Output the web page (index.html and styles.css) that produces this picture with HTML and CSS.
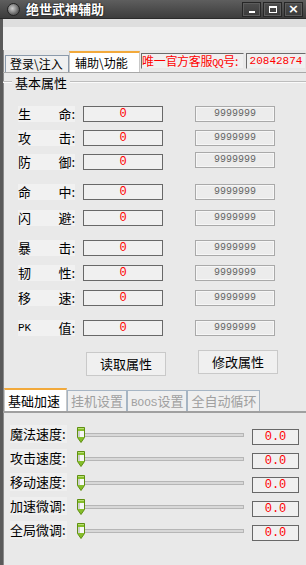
FILE: index.html
```html
<!DOCTYPE html>
<html>
<head>
<meta charset="utf-8">
<title>绝世武神辅助</title>
<link rel="stylesheet" href="styles.css">
</head>
<body>
<svg width="0" height="0" style="position:absolute">
	<defs>
		<symbol id="thumb" viewBox="0 0 8 16">
			<path d="M0.5 0.5h7v10l-3.5 5l-3.5-5z" fill="#86bf2a" stroke="#5f8f12"/>
			<rect x="1" y="4" width="6" height="6" fill="#f6f6f6"/>
			<rect x="1" y="4" width="2" height="6" fill="#cfcfcf"/>
			<rect x="1" y="1" width="6" height="1" fill="#b8e070"/>
		</symbol>
	</defs>
</svg>
<div class="win">
	<div class="titlebar">
		<span class="app-icon"></span>
		<span class="title">绝世武神辅助</span>
		<div class="win-btns">
			<span class="wbtn"><i class="ic-min"></i></span>
			<span class="wbtn"><i class="ic-max"></i></span>
			<span class="wbtn ic-close">×</span>
		</div>
	</div>
	<div class="frame">
		<div class="band"></div>

		<div class="tabs top-tabs">
			<span class="tab">登录\注入</span>
			<span class="tab active">辅助\功能</span>
			<span class="qq-label">唯一官方客服<em>QQ</em>号:</span>
			<span class="qq-num">20842874</span>
		</div>

		<div class="pane">
			<div class="group-title"><span>基本属性</span></div>

			<div class="attrs">
				<div class="block">
					<div class="row"><span class="lbl"><b>生</b><b>命:</b></span><span class="val">0</span><span class="max">9999999</span></div>
					<div class="row"><span class="lbl"><b>攻</b><b>击:</b></span><span class="val">0</span><span class="max">9999999</span></div>
					<div class="row"><span class="lbl"><b>防</b><b>御:</b></span><span class="val">0</span><span class="max up">9999999</span></div>
				</div>
				<div class="block b2">
					<div class="row"><span class="lbl"><b>命</b><b>中:</b></span><span class="val">0</span><span class="max">9999999</span></div>
					<div class="row"><span class="lbl"><b>闪</b><b>避:</b></span><span class="val">0</span><span class="max">9999999</span></div>
				</div>
				<div class="block b3">
					<div class="row"><span class="lbl"><b>暴</b><b>击:</b></span><span class="val">0</span><span class="max">9999999</span></div>
					<div class="row"><span class="lbl"><b>韧</b><b>性:</b></span><span class="val">0</span><span class="max">9999999</span></div>
					<div class="row"><span class="lbl"><b>移</b><b>速:</b></span><span class="val">0</span><span class="max">9999999</span></div>
				</div>
				<div class="block">
					<div class="row"><span class="lbl"><b class="pk">PK</b><b>值:</b></span><span class="val">0</span><span class="max">9999999</span></div>
				</div>
			</div>

			<div class="actions">
				<span class="btn">读取属性</span>
				<span class="btn up">修改属性</span>
			</div>

			<div class="tabs sub-tabs">
				<span class="tab active">基础加速</span>
				<span class="tab off">挂机设置</span>
				<span class="tab off"><em>BOOS</em>设置</span>
				<span class="tab off">全自动循环</span>
			</div>

			<div class="speeds">
				<div class="srow"><span class="slbl">魔法速度:</span><span class="slider"><svg class="thumb"><use href="#thumb"/></svg><i class="track"></i></span><span class="sval">0.0</span></div>
				<div class="srow"><span class="slbl">攻击速度:</span><span class="slider"><svg class="thumb"><use href="#thumb"/></svg><i class="track"></i></span><span class="sval">0.0</span></div>
				<div class="srow"><span class="slbl">移动速度:</span><span class="slider"><svg class="thumb"><use href="#thumb"/></svg><i class="track"></i></span><span class="sval">0.0</span></div>
				<div class="srow"><span class="slbl">加速微调:</span><span class="slider"><svg class="thumb"><use href="#thumb"/></svg><i class="track"></i></span><span class="sval">0.0</span></div>
				<div class="srow"><span class="slbl">全局微调:</span><span class="slider"><svg class="thumb"><use href="#thumb"/></svg><i class="track"></i></span><span class="sval">0.0</span></div>
			</div>
		</div>
	</div>
</div>
</body>
</html>
```
FILE: styles.css
```css
body { margin: 0; background: #e9e9e9; font-family: "Noto Sans CJK SC", "DejaVu Sans", sans-serif; font-size: 12px; color: #000; }
.win { width: 306px; height: 565px; overflow: hidden; }
.titlebar { height: 18px; display: flex; align-items: center; background: linear-gradient(#5e5e5e, #3c3c3c); border-bottom: 1px solid #2a2a2a; }
.app-icon { width: 11px; height: 11px; margin-left: 7px; border-radius: 50%; background: radial-gradient(circle at 40% 40%, #cfcfcf, #6a6a6a 60%, #333); border: 1px solid #222; }
.title { margin-left: 6px; color: #fff; font-weight: bold; font-size: 13px; line-height: 18px; text-shadow: 0 0 2px #000; }
.win-btns { margin-left: auto; margin-right: 3px; display: flex; gap: 2px; }
.wbtn { width: 17px; height: 13px; border: 1px solid #262626; background: linear-gradient(#4e4e4e, #3a3a3a); box-shadow: inset 0 0 0 1px #5c5c5c; color: #fff; display: flex; align-items: center; justify-content: center; font-size: 13px; font-weight: bold; font-family: "DejaVu Sans", sans-serif; }
.ic-min { width: 6px; height: 2px; background: #fff; margin-top: 6px; }
.ic-max { width: 6px; height: 4px; border: 1px solid #fff; border-top-width: 2px; }
.ic-close { line-height: 12px; }

.frame { height: 546px; border-left: 3px solid #5a5a5a; box-shadow: inset 1px 0 #8a8a8a; }
.band { height: 8px; background: #dedede; border-bottom: 23px solid #efefef; }

.tabs { display: flex; align-items: flex-end; }
.top-tabs { margin-top: 2px; padding-left: 2px; height: 20px; border-bottom: 1px solid #a8a8a8; }
.tab { height: 16px; line-height: 16px; padding: 0 4px; background: #f0f0f0; border: 1px solid #8b9aab; border-bottom: none; white-space: nowrap; }
.tab.active { height: 19px; line-height: 19px; background: #fff; border: 1px solid #c8c8c8; border-top: 2px solid #f2a93b; border-bottom: none; padding: 0 5px; }
.top-tabs .tab { width: 54px; }
.top-tabs .tab.active { width: 59px; }
.qq-label, .qq-num { align-self: flex-start; margin-top: 1px; height: 14px; line-height: 14px; background: #f0f0f0; color: #f00; border: 1px solid; border-color: #6b6b6b #e8e8e8 #e8e8e8 #6b6b6b; }
.qq-label { margin-left: 1px; width: 101px; font-size: 12px; white-space: nowrap; overflow: hidden; letter-spacing: -0.3px; }
.qq-label em { font-style: normal; font-family: "Liberation Mono", monospace; font-size: 10px; letter-spacing: -0.5px; }
.qq-num { margin-left: 2px; flex: 1; text-align: center; font-family: "Liberation Mono", monospace; font-size: 11px; }

.pane { padding-top: 1px; }
.group-title { position: relative; height: 14px; margin-left: 9px; }
.group-title::before { content: ""; position: absolute; left: -9px; right: 0; top: 7px; border-top: 1px solid #bdbdbd; border-bottom: 1px solid #fafafa; }
.group-title span { position: relative; background: #e9e9e9; padding: 0 3px; font-size: 13px; line-height: 14px; }

.attrs { margin-top: 18px; margin-left: 15px; }
.block { display: flex; flex-direction: column; gap: 8px; margin-bottom: 14px; }
.block.b2 { gap: 10px; }
.block.b3 { gap: 9px; }
.row { display: flex; align-items: center; height: 16px; }
.lbl { width: 57px; height: 16px; background: #f1f1f1; display: flex; justify-content: space-between; font-size: 13px; line-height: 16px; }
.lbl b { font-weight: normal; }
.lbl .pk { font-family: "Liberation Mono", monospace; font-size: 11px; }
.val { margin-left: 8px; width: 78px; height: 14px; line-height: 14px; border: 1px solid #686868; background: #f0f0f0; color: #f00; text-align: center; font-family: "Liberation Mono", monospace; font-size: 12px; }
.max { margin-left: 32px; width: 76px; height: 12px; line-height: 12px; border: 1px solid #a9a9a9; box-shadow: inset 0 0 0 1px #f6f6f6; padding: 1px; background: #ececec; color: #666; text-align: center; font-family: "Liberation Mono", monospace; font-size: 10px; }
.max.up { position: relative; top: -2px; }

.actions { display: flex; align-items: flex-start; margin-left: 83px; margin-top: 14px; height: 26px; }
.btn { width: 78px; height: 22px; line-height: 22px; background: #f0f0f0; border: 1px solid #c9c9c9; text-align: center; font-size: 13px; margin-top: 2px; }
.btn.up { margin-left: 32px; margin-top: 0; }

.sub-tabs { margin-top: 12px; padding-left: 1px; height: 23px; border-bottom: 2px solid #a0a0a0; }
.sub-tabs .tab { height: 20px; line-height: 20px; padding: 0 3px; font-size: 13px; }
.sub-tabs .tab.active { height: 21px; line-height: 21px; width: 55px; padding: 0 3px; font-size: 13px; }
.tab.off { color: #a0a0a0; border-color: #a6b5c4; background: #efefef; }
.tab.off em { font-style: normal; font-family: "Liberation Mono", monospace; font-size: 11px; }

.speeds { margin-top: 12px; margin-left: 7px; display: flex; flex-direction: column; gap: 6px; }
.srow { display: flex; align-items: center; height: 18px; }
.slbl { width: 57px; height: 18px; line-height: 18px; background: #efefef; font-size: 13px; white-space: nowrap; }
.slider { position: relative; margin-left: 10px; width: 167px; height: 18px; }
.track { position: absolute; left: 4px; right: 0; top: 8px; height: 2px; border: 1px solid #b6b6b6; background: #d8d8d8; }
.thumb { position: absolute; left: 0; top: 2px; width: 8px; height: 16px; z-index: 1; }
.sval { margin-left: 8px; margin-top: 6px; width: 45px; height: 14px; line-height: 14px; border: 1px solid #686868; background: #f0f0f0; color: #f00; text-align: center; font-family: "Liberation Mono", monospace; font-size: 12px; }
```
